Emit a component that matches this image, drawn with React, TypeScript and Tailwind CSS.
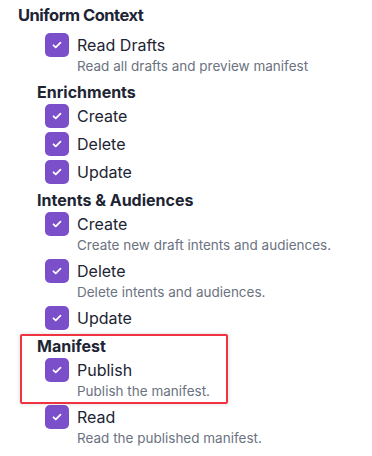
import * as React from "react";

interface IPermission {
  label: string;
  description?: string;
}

interface IGroup {
  title: string;
  items: IPermission[];
}

const groups: IGroup[] = [
  {
    title: "Enrichments",
    items: [{ label: "Create" }, { label: "Delete" }, { label: "Update" }],
  },
  {
    title: "Intents & Audiences",
    items: [
      { label: "Create", description: "Create new draft intents and audiences." },
      { label: "Delete", description: "Delete intents and audiences." },
      { label: "Update" },
    ],
  },
];

const Check = () => (
  <span className="flex h-6 w-6 shrink-0 items-center justify-center rounded-[5px] bg-[#7b4fc9]">
    <svg viewBox="0 0 16 16" className="h-3.5 w-3.5" fill="none">
      <path
        d="M4 8.3l2.6 2.5L12 5.4"
        stroke="#fff"
        strokeWidth="2"
        strokeLinecap="round"
        strokeLinejoin="round"
      />
    </svg>
  </span>
);

const Permission = ({ label, description }: IPermission) => (
  <div className="flex flex-col pl-[45px]">
    <label className="flex h-6 items-center gap-2">
      <Check />
      <span className="text-[16px] leading-6 text-[#1d2433]">{label}</span>
    </label>
    {description && (
      <p className="pl-8 text-[13.5px] leading-[19px] text-[#6b7280]">{description}</p>
    )}
  </div>
);

const GroupTitle = ({ children }: { children: React.ReactNode }) => (
  <h4 className="-mb-1 pl-[37px] text-[16px] font-bold leading-6 text-[#1d2433]">{children}</h4>
);

export default function App() {
  return (
    <div className="relative h-[456px] w-[372px] overflow-hidden bg-white pt-px font-[family-name:Inter,sans-serif]">
      <h3 className="pl-[18px] text-[16.5px] font-bold leading-7 tracking-[-0.5px] text-[#1d2433]">
        Uniform Context
      </h3>

      <div className="mt-1 flex flex-col gap-1">
        <Permission label="Read Drafts" description="Read all drafts and preview manifest" />

        {groups.map((group) => (
          <React.Fragment key={group.title}>
            <GroupTitle>{group.title}</GroupTitle>
            {group.items.map((item) => (
              <Permission key={item.label} {...item} />
            ))}
          </React.Fragment>
        ))}

        <GroupTitle>Manifest</GroupTitle>
        <Permission label="Publish" description="Publish the manifest." />
        <Permission label="Read" description="Read the published manifest." />
      </div>

      {/* highlight annotation */}
      <div className="pointer-events-none absolute left-[20px] top-[334px] h-[70px] w-[208px] rounded-[2px] border-2 border-[#ef3340] shadow-[0_0_4px_rgba(0,0,0,0.15)]" />
    </div>
  );
}
